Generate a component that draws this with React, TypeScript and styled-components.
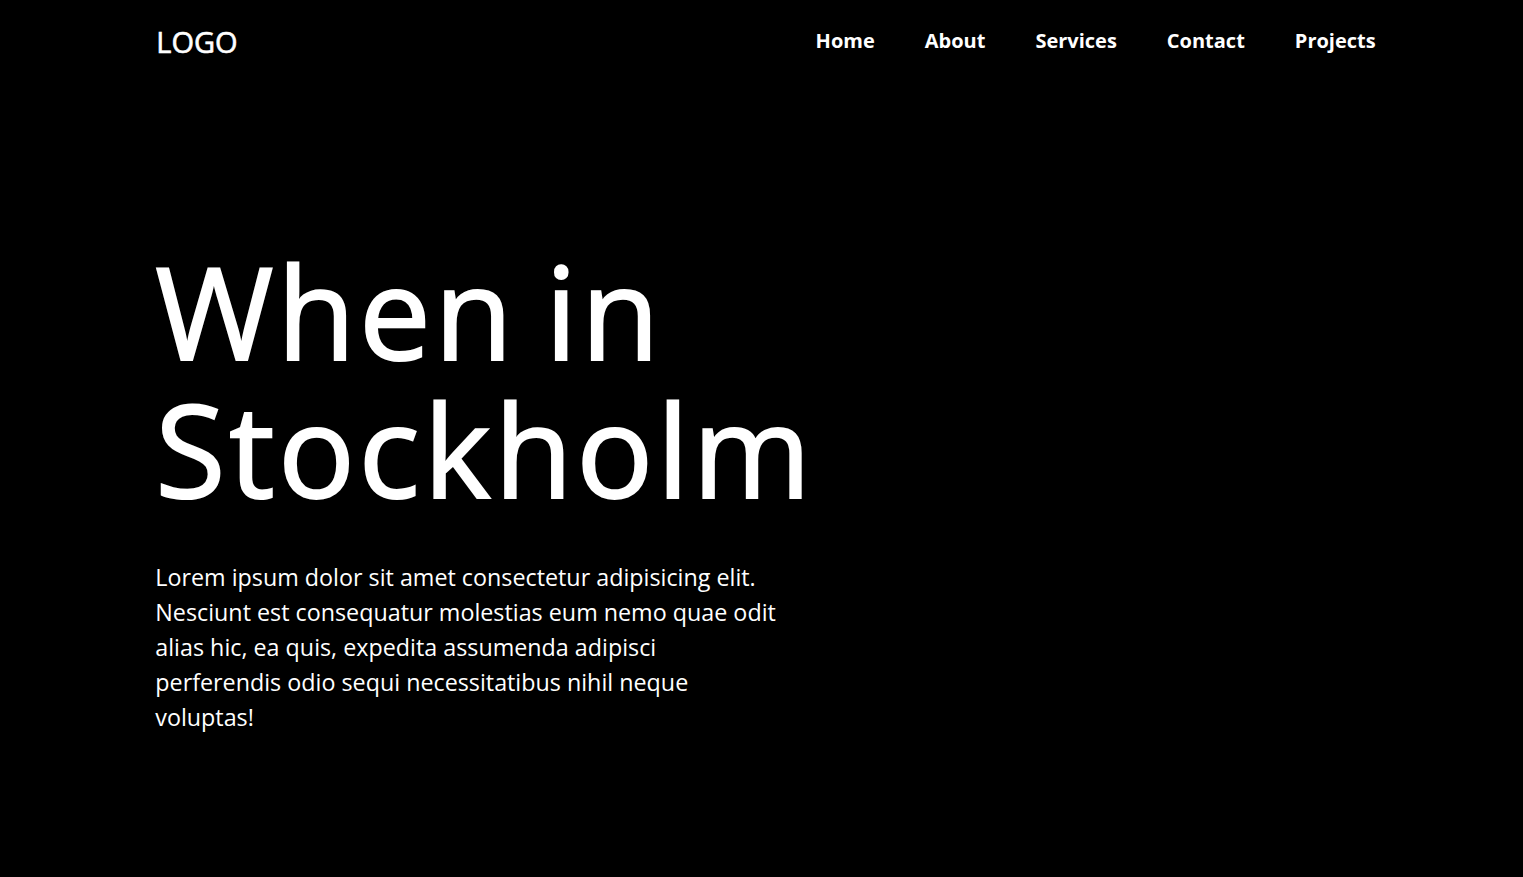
import styled, { createGlobalStyle } from 'styled-components'

const NAV_LINKS = ['Home', 'About', 'Services', 'Contact', 'Projects']

const GlobalStyle = createGlobalStyle`
	html, body {
		margin: 0;
		padding: 0;
		background: #000;
		color: #fff;
		font-family: 'Open Sans', 'Noto Sans', sans-serif;
	}
	* {
		box-sizing: border-box;
	}
`

const App = () => {
	return (
		<Page>
			<GlobalStyle />
			<Header>
				<Logo>LOGO</Logo>
				<Nav>
					{NAV_LINKS.map((link) => (
						<NavLink key={link} href='#'>
							{link}
						</NavLink>
					))}
				</Nav>
			</Header>
			<Hero>
				<Title>
					When in
					<br />
					Stockholm
				</Title>
				<Lead>
					Lorem ipsum dolor sit amet consectetur adipisicing elit. Nesciunt est consequatur
					molestias eum nemo quae odit alias hic, ea quis, expedita assumenda adipisci
					perferendis odio sequi necessitatibus nihil neque voluptas!
				</Lead>
			</Hero>
		</Page>
	)
}

export default App

const Page = styled.div`
	min-height: 877px;
	background: #000;
`

const Header = styled.header`
	width: 80%;
	margin: 0 auto;
	padding: 0 0 0 2px;
	height: 82px;
	display: flex;
	align-items: center;
	justify-content: space-between;
	transform: translateX(2px);
`

const Logo = styled.div`
	font-size: 29px;
	font-weight: 400;
	line-height: 1;
	-webkit-text-stroke: 0.6px #fff;
`

const Nav = styled.nav`
	display: flex;
	gap: 50px;
	margin: -2px -3px 0 0;
`

const NavLink = styled.a`
	color: #fff;
	text-decoration: none;
	font-size: 20px;
	font-weight: 700;
`

const Hero = styled.section`
	width: 80%;
	margin: 0 auto;
	padding: 160px 0 0 3px;
`

const Title = styled.h1`
	margin: 0;
	font-size: 128px;
	font-weight: 400;
	letter-spacing: 3.5px;
	word-spacing: -8px;
	line-height: 138px;
	-webkit-text-stroke: 2px #fff;
`

const Lead = styled.p`
	margin: 42px 0 0;
	max-width: 626px;
	font-size: 23.3px;
	line-height: 35px;
`
